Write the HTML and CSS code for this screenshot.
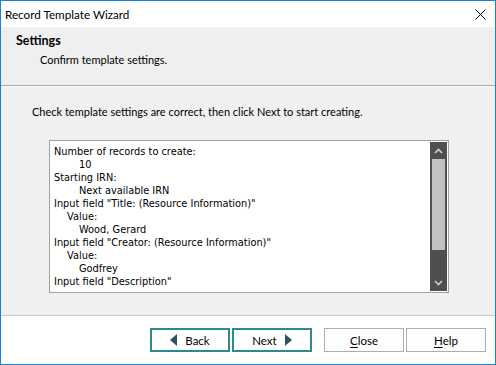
FILE: index.html
```html
<!DOCTYPE html>
<html>
<head>
<meta charset="utf-8">
<link rel="stylesheet" href="styles.css">
</head>
<body>
<div class="window">
  <div class="titlebar">
    <span class="title">Record Template Wizard</span>
    <svg class="close-x" width="11" height="11" viewBox="0 0 11 11"><path d="M0.5 0.5 L10.5 10.5 M10.5 0.5 L0.5 10.5" stroke="#000" stroke-width="1" fill="none"/></svg>
  </div>
  <div class="header">
    <div class="h-title">Settings</div>
    <div class="h-sub">Confirm template settings.</div>
  </div>
  <div class="content">
    <div class="intro">Check template settings are correct, then click Next to start creating.</div>
    <div class="listbox">
      <div class="lines">
        <div>Number of records to create:</div>
        <div class="i2">10</div>
        <div>Starting IRN:</div>
        <div class="i2">Next available IRN</div>
        <div>Input field "Title: (Resource Information)"</div>
        <div class="i1">Value:</div>
        <div class="i2">Wood, Gerard</div>
        <div>Input field "Creator: (Resource Information)"</div>
        <div class="i1">Value:</div>
        <div class="i2">Godfrey</div>
        <div>Input field "Description"</div>
      </div>
      <div class="scrollbar">
        <div class="sb-btn"><svg width="9" height="6" viewBox="0 0 9 6"><path d="M1 5 L4.5 1.5 L8 5" stroke="#cfcfcf" stroke-width="1.6" fill="none"/></svg></div>
        <div class="sb-thumb"></div>
        <div class="sb-space"></div>
        <div class="sb-btn"><svg width="9" height="6" viewBox="0 0 9 6"><path d="M1 1 L4.5 4.5 L8 1" stroke="#cfcfcf" stroke-width="1.6" fill="none"/></svg></div>
      </div>
    </div>
  </div>
  <div class="footer">
    <button class="btn btn-nav"><svg width="7" height="12" viewBox="0 0 7 12"><polygon points="7,0 0,6 7,12" fill="#2d5461"/></svg><span>Back</span></button>
    <button class="btn btn-nav btn-next"><span>Next</span><svg width="7" height="12" viewBox="0 0 7 12"><polygon points="0,0 7,6 0,12" fill="#2d5461"/></svg></button>
    <button class="btn btn-plain btn-close"><span><u>C</u>lose</span></button>
    <button class="btn btn-plain"><span><u>H</u>elp</span></button>
  </div>
</div>
</body>
</html>
```
FILE: styles.css
```css
html, body {
  margin: 0;
  padding: 0;
  background: #ffffff;
}
.window {
  width: 496px;
  height: 365px;
  box-sizing: border-box;
  border: 1px solid #1883d7;
  display: flex;
  flex-direction: column;
  font-family: Lato, "Liberation Sans", sans-serif;
  font-size: 11px;
  color: #000;
}
.titlebar {
  height: 26px;
  background: #ffffff;
  display: flex;
  align-items: center;
  justify-content: space-between;
  padding: 0 9px 0 4px;
}
.title {
  font-size: 11.7px;
  line-height: 16px;
}
.close-x {
  display: block;
  margin-top: 1px;
}
.header {
  height: 59px;
  box-sizing: border-box;
  background: #efefef;
  border-bottom: 1px solid #a9a9a9;
  padding: 6px 0 0 15px;
}
.h-title {
  font-weight: bold;
  font-size: 12.5px;
  line-height: 16px;
}
.h-sub {
  line-height: 16px;
  margin-top: 3px;
  padding-left: 24px;
}
.content {
  flex: 1;
  box-sizing: border-box;
  background: #f0f0f0;
  border-top: 1px solid #ffffff;
  border-bottom: 1px solid #c8c8c8;
  padding: 17px 0 0 31px;
}
.intro {
  line-height: 16px;
}
.listbox {
  margin: 20px 0 0 17px;
  width: 400px;
  height: 153px;
  box-sizing: border-box;
  border: 1px solid #a0a0a0;
  background: #fff;
  padding: 1px;
  display: flex;
}
.lines {
  flex: 1;
  padding: 3px 0 0 3px;
  font-family: "DejaVu Sans", Verdana, sans-serif;
  font-size: 9.8px;
  line-height: 13px;
  color: #000;
  overflow: hidden;
}
.i1 { padding-left: 13px; }
.i2 { padding-left: 25px; }
.scrollbar {
  width: 17px;
  background: #4f4f4f;
  display: flex;
  flex-direction: column;
  align-items: center;
}
.sb-btn {
  height: 17px;
  display: flex;
  align-items: center;
  justify-content: center;
  width: 100%;
}
.sb-btn svg { display: block; }
.sb-thumb {
  width: 13px;
  height: 91px;
  background: #c2c2c2;
}
.sb-space { flex: 1; }
.footer {
  height: 48px;
  background: #ffffff;
  display: flex;
  align-items: flex-start;
  padding: 12px 0 0 149px;
  box-sizing: border-box;
}
.btn {
  width: 80px;
  height: 24px;
  box-sizing: border-box;
  margin: 0 2px 0 0;
  font-family: Lato, "Liberation Sans", sans-serif;
  font-size: 11.5px;
  color: #000;
  display: flex;
  align-items: center;
  justify-content: center;
  padding: 0;
  background: #ffffff;
}
.btn-nav {
  border: 2px solid #2e8b8b;
  gap: 8px;
}
.btn-nav svg { display: block; }
.btn-plain {
  border: 1px solid #adadad;
  background: #fdfdfd;
}
.btn-close { margin-left: 10px; }
u { text-decoration: underline; text-underline-offset: 2px; }
```
